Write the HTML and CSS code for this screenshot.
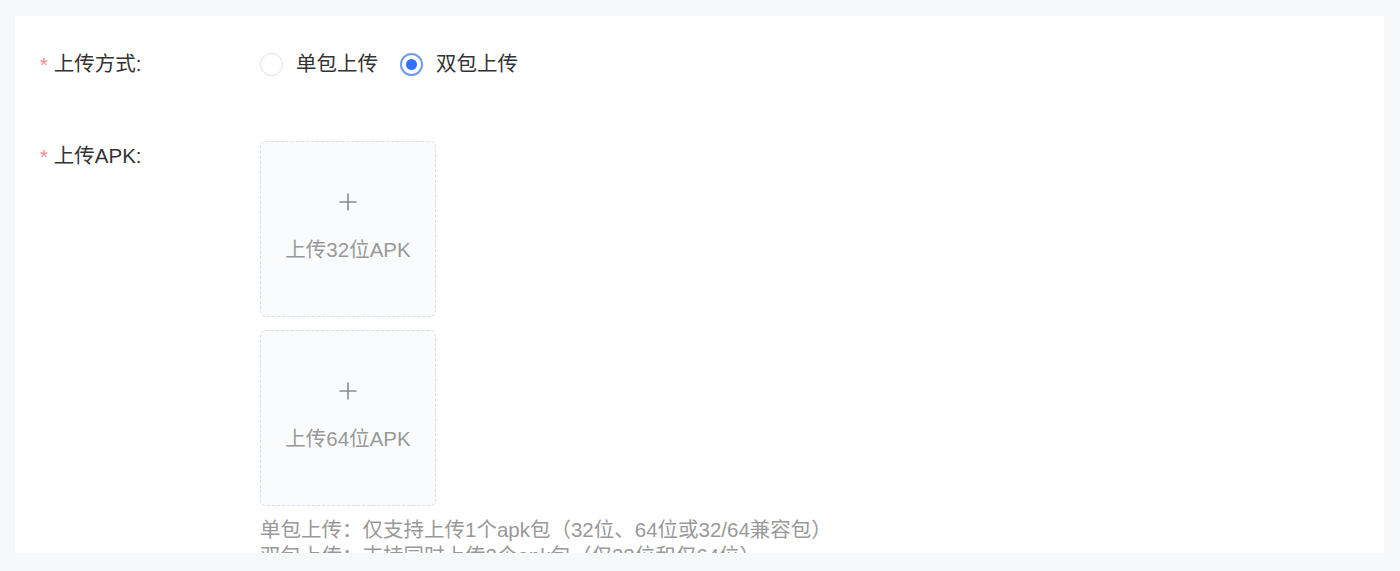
FILE: index.html
```html
<!DOCTYPE html>
<html lang="zh-CN">
<head>
    <meta charset="UTF-8">
    <meta name="viewport" content="width=device-width, initial-scale=1.0">
    <title>上传APK</title>
    <link rel="stylesheet" href="styles.css">
</head>
<body>
    <div class="card">
        <form class="apk-form">
            <div class="form-item">
                <label class="form-label"><span class="required">*</span>上传方式:</label>
                <div class="form-content radio-group">
                    <label class="radio">
                        <span class="radio-circle"></span>
                        <span class="radio-text">单包上传</span>
                    </label>
                    <label class="radio is-checked">
                        <span class="radio-circle"></span>
                        <span class="radio-text">双包上传</span>
                    </label>
                </div>
            </div>

            <div class="form-item upload-item">
                <label class="form-label"><span class="required">*</span>上传APK:</label>
                <div class="form-content">
                    <div class="upload-list">
                        <div class="upload-box">
                            <svg class="upload-plus" width="20" height="20" viewBox="0 0 20 20">
                                <path d="M10 1.5v17M1.5 10h17" stroke="#8a8a8a" stroke-width="1.6" fill="none"/>
                            </svg>
                            <span class="upload-text">上传32位APK</span>
                        </div>
                        <div class="upload-box">
                            <svg class="upload-plus" width="20" height="20" viewBox="0 0 20 20">
                                <path d="M10 1.5v17M1.5 10h17" stroke="#8a8a8a" stroke-width="1.6" fill="none"/>
                            </svg>
                            <span class="upload-text">上传64位APK</span>
                        </div>
                    </div>
                    <div class="upload-tip">
                        <p>单包上传：仅支持上传1个apk包（32位、64位或32/64兼容包）</p>
                        <p>双包上传：支持同时上传2个apk包（仅32位和仅64位）</p>
                    </div>
                </div>
            </div>
        </form>
    </div>
</body>
</html>
```

FILE: styles.css
```css
:root {
    --page-bg: #f7f8fa;
    --text-main: #333;
    --text-muted: #999;
    --danger: #f78989;
    --primary: #3370ff;
    --border: #d9dce2;
}

body {
    margin: 0;
    padding: 16px 16px 0 15px;
    background-color: var(--page-bg);
    font-family: "Liberation Sans", "Noto Sans CJK SC", sans-serif;
    font-size: 20.5px;
    color: var(--text-main);
}

.card {
    background-color: #fff;
    height: 537px;
    overflow: hidden;
}

.apk-form {
    padding: 33px 25px;
}

.form-item {
    display: flex;
    margin-bottom: 61px;
}

.form-label {
    width: 220px;
    flex-shrink: 0;
    line-height: 30px;
    color: var(--text-main);
}

.form-label::after {
    content: "";
    margin-left: 2px;
}

.required {
    color: var(--danger);
    font-size: 20px;
    margin-right: 6px;
    vertical-align: -1px;
}

.form-content {
    flex: 1;
}

/* radios */
.radio-group {
    display: flex;
    align-items: center;
    gap: 22px;
    height: 30px;
}

.radio {
    display: flex;
    align-items: center;
    gap: 13px;
    cursor: pointer;
}

.radio-circle {
    width: 23px;
    height: 23px;
    border: 1px solid #dfe1e6;
    border-radius: 50%;
    box-sizing: border-box;
    display: flex;
    align-items: center;
    justify-content: center;
}

.radio.is-checked .radio-circle {
    border: 2px solid #6f9bf7;
}

.radio.is-checked .radio-circle::after {
    content: "";
    width: 11px;
    height: 11px;
    border-radius: 50%;
    background-color: var(--primary);
}

.radio-text {
    line-height: 30px;
    color: var(--text-main);
}

/* upload */
.upload-list {
    display: flex;
    flex-direction: column;
    gap: 13px;
}

.upload-box {
    width: 176px;
    height: 176px;
    box-sizing: border-box;
    border: 1px dashed var(--border);
    border-radius: 6px;
    background-color: #fafbfc;
    display: flex;
    flex-direction: column;
    align-items: center;
    justify-content: center;
    gap: 26px;
    cursor: pointer;
}

.upload-plus {
    display: block;
    margin-top: -4px;
}

.upload-text {
    line-height: 24px;
    color: var(--text-muted);
}

.upload-tip {
    margin-top: 11px;
    color: var(--text-muted);
}

.upload-tip p {
    margin: 0;
    line-height: 26px;
}
```
